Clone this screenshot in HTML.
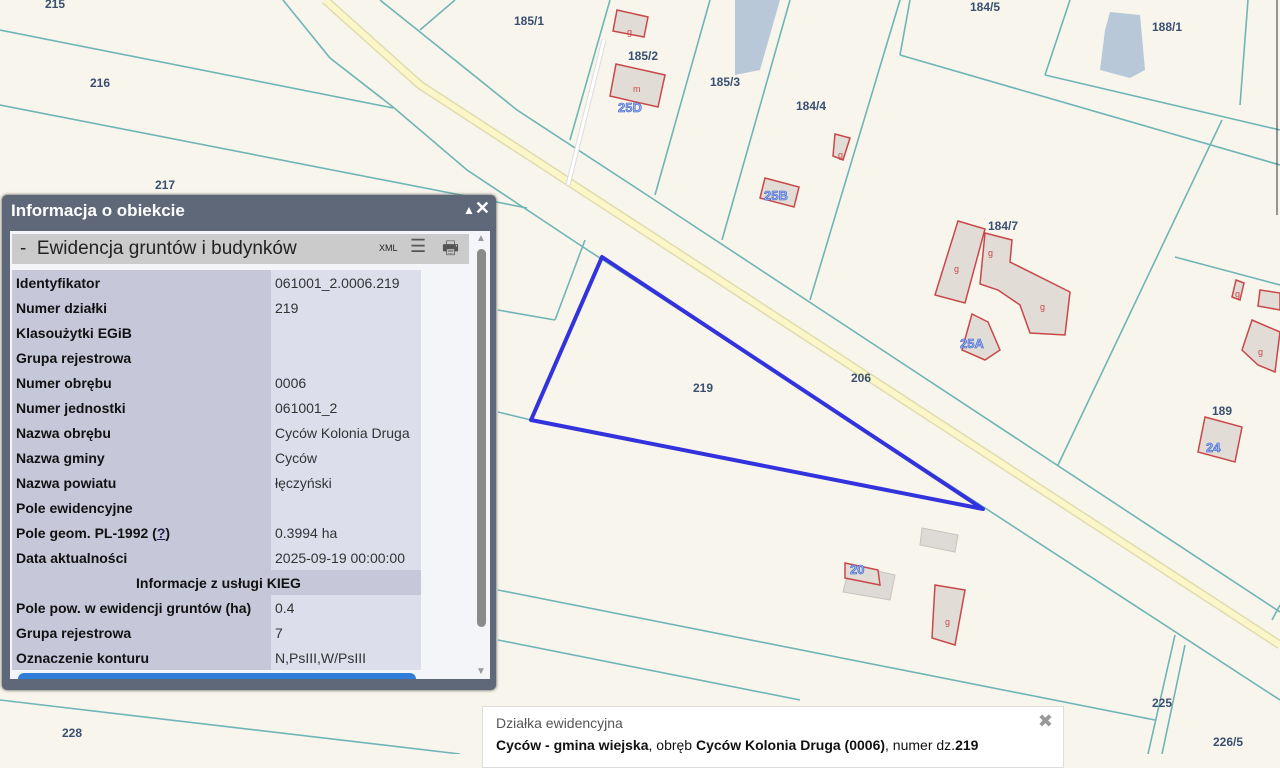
<!DOCTYPE html>
<html><head><meta charset="utf-8"><style>
body{margin:0;width:1280px;height:754px;overflow:hidden;background:#f8f5ec;font-family:"Liberation Sans",sans-serif;position:relative}
svg.map{position:absolute;left:0;top:0}
.lbl{font:bold 12px "Liberation Sans",sans-serif;fill:#3a4f70}
#panel{position:absolute;left:2px;top:195px;width:494px;height:495px;background:#5f6878;border-radius:5px;box-shadow:0 0 3px #444}
#title{position:absolute;left:9px;top:6px;color:#fff;font-weight:bold;font-size:17px}
#ctrl{position:absolute;right:6px;top:3px;color:#fff;font-size:18px;font-weight:bold}
#inner{position:absolute;left:8px;top:36px;width:480px;height:448px;background:#f4f5f8;overflow:hidden}
#sec{position:absolute;left:2px;top:3px;width:457px;height:30px;background:#cbcbcb;font-size:19px;color:#222}
#sec span{position:absolute;left:8px;top:4px}
table{position:absolute;left:2px;top:39px;border-collapse:collapse;font-size:14px}
td{height:25px;padding:0 0 0 4px;white-space:nowrap;color:#111}
td.l{width:255px;background:#c7c7da;font-weight:bold}
td.v{width:146px;background:#dcdeec;color:#333}
td.h{background:#c7c7da;text-align:center;font-weight:bold}
#sb{position:absolute;left:464px;top:2px;width:14px;height:444px}
#pop{position:absolute;left:482px;top:706px;width:580px;height:60px;background:#fff;border:1px solid #ddd;font-size:14px}
</style></head><body>
<svg class="map" width="1280" height="754" viewBox="0 0 1280 754">
<path d="M325 0 L420 85 L1280 645" fill="none" stroke="#e0dcb0" stroke-width="9"/>
<path d="M325 0 L420 85 L1280 645" fill="none" stroke="#fbf7c8" stroke-width="6"/>
<g fill="none" stroke="#6fb5b5" stroke-width="1.6">
<polyline points="380,0 420,32 517,110 650,197 1280,612"/>
<polyline points="283,0 330,58 393,107 467,170 583,247 985,508 1280,700"/>
<line x1="0" y1="30" x2="393" y2="108"/>
<line x1="0" y1="105" x2="527" y2="208"/>
<line x1="420" y1="30" x2="455" y2="0"/>
<line x1="570" y1="140" x2="610" y2="0"/>
<line x1="655" y1="195" x2="710" y2="0"/>
<line x1="722" y1="240" x2="790" y2="0"/>
<line x1="810" y1="300" x2="900" y2="0"/>
<line x1="900" y1="55" x2="1280" y2="165"/>
<line x1="1045" y1="75" x2="1280" y2="130"/>
<line x1="1045" y1="75" x2="1070" y2="0"/>
<line x1="1240" y1="105" x2="1248" y2="0"/>
<line x1="1058" y1="465" x2="1222" y2="120"/>
<line x1="1175" y1="257" x2="1280" y2="285"/>
<line x1="900" y1="55" x2="910" y2="0"/>
<line x1="555" y1="320" x2="585" y2="240"/>
<line x1="498" y1="310" x2="555" y2="320"/>
<line x1="498" y1="412" x2="531" y2="420"/>
<line x1="498" y1="590" x2="1155" y2="720"/>
<line x1="498" y1="640" x2="800" y2="700"/>
<line x1="1148" y1="754" x2="1175" y2="635"/>
<line x1="1162" y1="754" x2="1185" y2="645"/>
<line x1="1272" y1="620" x2="1280" y2="605"/>
<line x1="0" y1="700" x2="460" y2="754"/>
</g>
<path d="M568 185 L604 40" stroke="#ddd" stroke-width="5"/><path d="M568 185 L604 40" stroke="#fff" stroke-width="3"/>
<path d="M735 0 L780 0 L760 70 L735 75 Z" fill="#b8c8d8"/>
<path d="M1110 12 L1140 15 L1145 70 L1130 78 L1100 70 L1105 30Z" fill="#b8c8d8"/>
<g fill="#e2dcd6" stroke="#c9474a" stroke-width="1.5">
<path d="M617 10 L648 17 L644 37 L613 31Z"/>
<path d="M616 64 L665 75 L658 107 L610 96Z"/>
<path d="M835 134 L850 138 L843 160 L833 156Z"/>
<path d="M765 178 L799 187 L794 207 L760 198Z"/>
<path d="M958 221 L985 229 L965 303 L935 295Z"/>
<path d="M985 233 L1012 240 L1010 262 L1070 292 L1065 335 L1030 333 L1020 305 L998 290 L980 284Z"/>
<path d="M972 314 L988 322 L1000 350 L985 360 L962 350Z"/>
<path d="M1236 280 L1244 283 L1240 300 L1232 297Z"/>
<path d="M1260 290 L1280 293 L1280 310 L1258 306Z"/>
<path d="M1252 320 L1280 332 L1275 372 L1258 365 L1242 350Z"/>
<path d="M1205 417 L1242 427 L1235 462 L1198 452Z"/>
<path d="M935 585 L965 590 L955 645 L932 638Z"/>
</g>
<path d="M922 528 L958 535 L955 552 L920 545Z" fill="#dedad5" stroke="#c8c3bd"/>
<path d="M850 565 L895 575 L890 600 L843 592Z" fill="#dedad5" stroke="#c8c3bd"/>
<path d="M845 563 L878 570 L880 585 L845 578Z" fill="#e2dcd6" stroke="#c9474a" stroke-width="1.5"/>
<polygon points="602,257 531,420 983,509" fill="none" stroke="#3333dd" stroke-width="4" stroke-linejoin="round"/>
<g class="lbl">
<text x="45" y="8">215</text><text x="90" y="87">216</text><text x="155" y="189">217</text>
<text x="514" y="25">185/1</text><text x="628" y="60">185/2</text><text x="710" y="86">185/3</text>
<text x="796" y="110">184/4</text><text x="970" y="11">184/5</text><text x="1152" y="31">188/1</text>
<text x="988" y="230">184/7</text><text x="693" y="392">219</text><text x="851" y="382">206</text>
<text x="1212" y="415">189</text><text x="1152" y="707">225</text><text x="1213" y="746">226/5</text><text x="62" y="737">228</text>
</g>
<g font-size="13" font-weight="bold" fill="#9fb6ee" stroke="#3a5fcf" stroke-width="0.6">
<text x="618" y="112">25D</text><text x="764" y="200">25B</text><text x="960" y="348">25A</text><text x="1206" y="452">24</text><text x="850" y="574">20</text>
</g>
<g font-size="9" fill="#c9474a"><text x="627" y="35">g</text><text x="633" y="92">m</text><text x="838" y="158">g</text><text x="954" y="272">g</text><text x="988" y="256">g</text><text x="1040" y="310">g</text><text x="1235" y="297">g</text><text x="1258" y="355">g</text><text x="945" y="625">g</text></g>
<line x1="1277" y1="0" x2="1277" y2="215" stroke="#333" stroke-width="1"/>
</svg>
<div id="panel">
<div id="title">Informacja o obiekcie</div>
<div id="ctrl"><span style="font-size:12px">▲</span>✕</div>
<div id="inner">
<div id="sec"><span>-&nbsp; Ewidencja gruntów i budynków</span>
<span style="left:367px;top:9px;font-size:9px">XML</span>
<span style="left:398px;top:2px;font-size:18px;color:#555">☰</span>
<span style="left:430px;top:2px;font-size:18px;color:#555">🖶</span></div>
<table>
<tr><td class="l">Identyfikator</td><td class="v">061001_2.0006.219</td></tr>
<tr><td class="l">Numer działki</td><td class="v">219</td></tr>
<tr><td class="l">Klasoużytki EGiB</td><td class="v"></td></tr>
<tr><td class="l">Grupa rejestrowa</td><td class="v"></td></tr>
<tr><td class="l">Numer obrębu</td><td class="v">0006</td></tr>
<tr><td class="l">Numer jednostki</td><td class="v">061001_2</td></tr>
<tr><td class="l">Nazwa obrębu</td><td class="v">Cyców Kolonia Druga</td></tr>
<tr><td class="l">Nazwa gminy</td><td class="v">Cyców</td></tr>
<tr><td class="l">Nazwa powiatu</td><td class="v">łęczyński</td></tr>
<tr><td class="l">Pole ewidencyjne</td><td class="v"></td></tr>
<tr><td class="l">Pole geom. PL-1992 (<u style="color:#225">?</u>)</td><td class="v">0.3994 ha</td></tr>
<tr><td class="l">Data aktualności</td><td class="v">2025-09-19 00:00:00</td></tr>
<tr><td class="h" colspan="2">Informacje z usługi KIEG</td></tr>
<tr><td class="l">Pole pow. w ewidencji gruntów (ha)</td><td class="v">0.4</td></tr>
<tr><td class="l">Grupa rejestrowa</td><td class="v">7</td></tr>
<tr><td class="l">Oznaczenie konturu</td><td class="v">N,PsIII,W/PsIII</td></tr>
</table>
<div style="position:absolute;left:8px;top:442px;width:398px;height:10px;background:#2f7fd8;border-radius:6px 6px 0 0"></div>
<div id="sb"><div style="color:#999;font-size:10px;text-align:center">▲</div><div style="position:absolute;left:3px;top:16px;width:9px;height:378px;background:#8a8a8a;border-radius:5px"></div><div style="position:absolute;bottom:0;width:14px;color:#999;font-size:10px;text-align:center">▼</div></div>
</div></div>
<div id="pop"><div style="position:absolute;left:13px;top:8px;color:#555">Działka ewidencyjna</div>
<div style="position:absolute;right:10px;top:4px;color:#999;font-size:18px">✖</div>
<div style="position:absolute;left:13px;top:30px;color:#111"><b>Cyców - gmina wiejska</b>, obręb <b>Cyców Kolonia Druga (0006)</b>, numer dz.<b>219</b></div></div>
</body></html>
